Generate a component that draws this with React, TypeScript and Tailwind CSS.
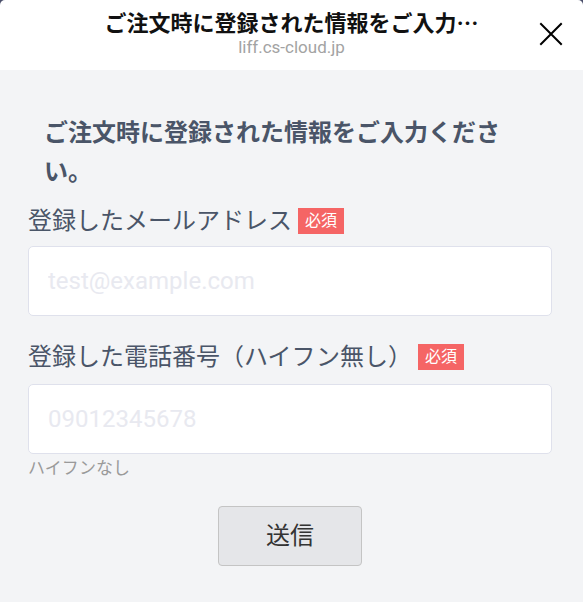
export default function App() {
  const font = { fontFamily: 'Roboto, "Noto Sans CJK JP", sans-serif' }
  const jp = { fontFamily: '"Noto Sans CJK JP", sans-serif' }
  return (
    <div className="w-[583px] h-[602px] bg-[#4b4f6b] overflow-hidden" style={font}>
      <header className="h-[70px] bg-white rounded-t-[5px] flex items-start relative">
        <div className="flex-1 px-[40px] pt-[6px] flex flex-col items-center">
          <div className="text-[22px] leading-[30px] font-bold text-[#111] whitespace-nowrap" style={jp}>
            ご注文時に登録された情報をご入力…
          </div>
          <div className="text-[17px] leading-[22px] text-[#a3a3a3]">liff.cs-cloud.jp</div>
        </div>
        <button className="absolute right-[20px] top-[22px] w-[24px] h-[24px] flex items-center justify-center">
          <svg viewBox="0 0 24 24" className="w-[24px] h-[24px]" fill="none" stroke="#000" strokeWidth="2" strokeLinecap="square">
            <path d="M2 2 L22 22 M22 2 L2 22" />
          </svg>
        </button>
      </header>

      <main className="h-[532px] bg-[#f3f4f6] pl-[28px] pr-[31px]">
        <h1 className="pt-[44px] pl-[16px] pr-[40px] text-[24px] leading-[39px] font-bold text-[#4a5568]">
          ご注文時に登録された情報をご入力ください。
        </h1>

        <div className="mt-[16px] flex items-center h-[26px]">
          <span className="text-[24px] leading-[26px] text-[#4a5568]">登録したメールアドレス</span>
          <span className="ml-[6px] bg-[#f56565] text-white text-[16px] leading-[26px] px-[7px] h-[26px]">必須</span>
        </div>
        <input
          placeholder="test@example.com"
          className="mt-[12px] w-full h-[70px] bg-white border-[1.5px] border-[#dfe1ec] rounded-[5px] px-[19px] text-[24px] placeholder:text-[#e8e9f0] outline-none"
        />

        <div className="mt-[28px] flex items-center h-[26px]">
          <span className="text-[24px] leading-[26px] text-[#4a5568]">登録した電話番号（ハイフン無し）</span>
          <span className="ml-[6px] bg-[#f56565] text-white text-[16px] leading-[26px] px-[7px] h-[26px]">必須</span>
        </div>
        <input
          placeholder="09012345678"
          className="mt-[14px] w-full h-[70px] bg-white border-[1.5px] border-[#dfe1ec] rounded-[5px] px-[19px] text-[24px] placeholder:text-[#e8e9f0] outline-none"
        />
        <p className="mt-[4px] text-[17px] leading-[20px] text-[#9a9a9a]">ハイフンなし</p>

        <div className="mt-[28px] flex justify-center">
          <button className="w-[144px] h-[60px] bg-[#e5e6e9] border-[1.5px] border-[#c4c4c4] rounded-[4px] text-[24px] text-[#333]">
            送信
          </button>
        </div>
      </main>
    </div>
  )
}
